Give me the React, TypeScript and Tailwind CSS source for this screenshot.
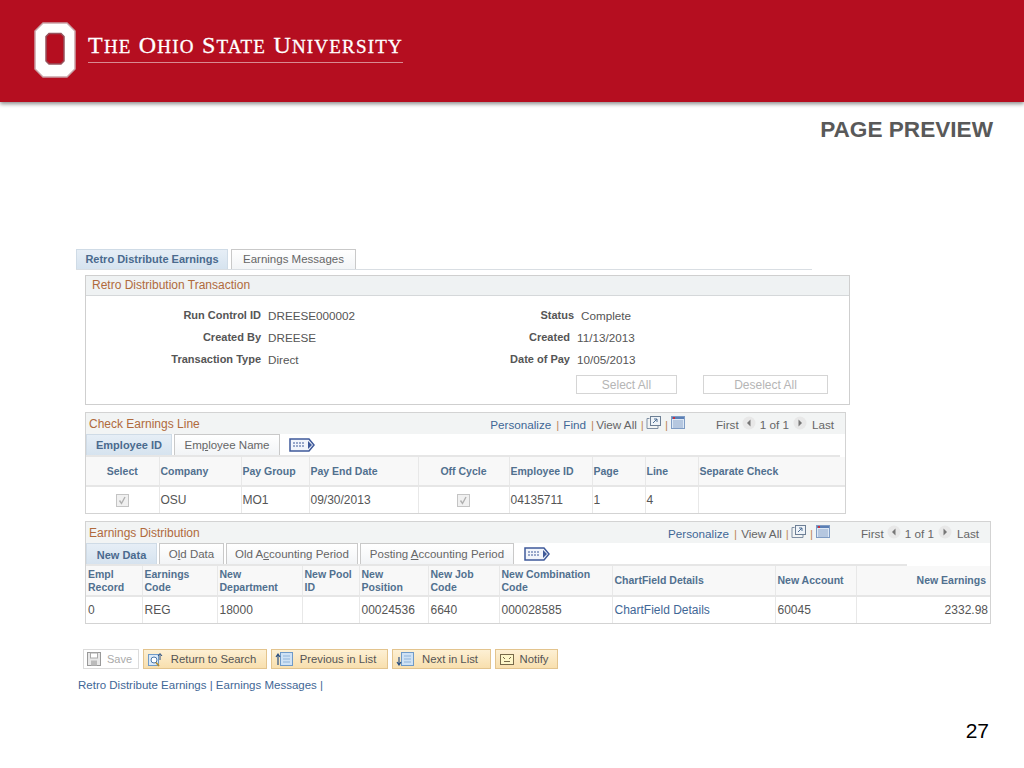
import type { ReactNode } from "react";

function Logo() {
  return (
    <svg width="42" height="56" viewBox="0 0 42 56" className="shrink-0">
      <path d="M9 1H33L41 9V47L33 55H9L1 47V9Z" fill="#fff" stroke="#c9a3a8" strokeWidth="1.5" />
      <path d="M15 11.500H27L30 14.500V39L27 42H15L12 39V14.500Z" fill="#b50e20" stroke="#96525c" strokeWidth="1.5" />
    </svg>
  );
}

function Tab({ active, children, w }: { active?: boolean; children: ReactNode; w: string }) {
  return (
    <div
      className={
        active
          ? `${w} h-full flex items-center justify-center border border-b-0 border-[#cfdbe6] bg-gradient-to-b from-[#e6eef6] to-[#d6e3ef] text-[11px] text-[#4a6a8e] font-bold`
          : `${w} h-full flex items-center justify-center border border-b-0 border-[#c9c9c9] bg-gradient-to-b from-white to-[#f2f4f6] text-[11.5px] text-[#666]`
      }
    >
      <span>{children}</span>
    </div>
  );
}

function DownloadIcon() {
  return (
    <svg width="15" height="14" viewBox="0 0 15 14" className="shrink-0">
      <path d="M3.500 2.500H1V12.500H12V10" fill="none" stroke="#7f8fa3" />
      <rect x="4.500" y="0.500" width="10" height="9" fill="#eef3f8" stroke="#6d7f95" />
      <path d="M7 7L11 3M8 3H11V6" fill="none" stroke="#4f6f94" />
    </svg>
  );
}

function GridIcon() {
  return (
    <svg width="14" height="13" viewBox="0 0 14 13" className="shrink-0">
      <rect x="0.500" y="0.500" width="13" height="12" fill="#dce8f6" stroke="#7f9cc4" />
      <rect x="1" y="1" width="12" height="2" fill="#5b7fb5" />
      <rect x="2" y="1" width="2" height="2" fill="#c9303e" />
      <path d="M2 5H12M2 7H12M2 9H12M2 11H12" stroke="#8ea6c9" />
    </svg>
  );
}

function ArrowCircle({ right }: { right?: boolean }) {
  return (
    <svg width="14" height="14" viewBox="0 0 14 14" className="shrink-0">
      <circle cx="7" cy="7" r="6.500" fill="#e8e8e8" />
      <path d={right ? "M5.500 3.500L9 7L5.500 10.500Z" : "M8.500 3.500L5 7L8.500 10.500Z"} fill="#777" />
    </svg>
  );
}

function ShowTabs() {
  return (
    <svg width="26" height="14" viewBox="0 0 26 14" className="shrink-0">
      <path d="M1 1H20L25 7L20 13H1Z" fill="#f2f5fb" stroke="#3f5a9a" strokeWidth="1.500" />
      <path d="M4 5H16M4 8H16" stroke="#3f5a9a" strokeDasharray="2 1" />
      <path d="M19 3L23 7L19 11Z" fill="#3f5a9a" />
    </svg>
  );
}

function Sep() {
  return <span className="text-[#c08a5c]">|</span>;
}

function GridTools({ find }: { find?: boolean }) {
  return (
    <div className="mt-[3px] flex items-center whitespace-nowrap text-[11.7px] text-[#666]">
      <span className="text-[#3f6796]">Personalize</span>
      <span className="ml-[5px] mr-[4px]"><Sep /></span>
      {find && (
        <>
          <span className="text-[#3f6796]">Find</span>
          <span className="ml-[5px] mr-[2px]"><Sep /></span>
        </>
      )}
      <span>View All</span>
      <span className="ml-[4px] mr-[2px]"><Sep /></span>
      <span className="-mt-1"><DownloadIcon /></span>
      <span className="ml-[4px] mr-[3px]"><Sep /></span>
      <span className="-mt-1"><GridIcon /></span>
      <span className="ml-[31px]">First</span>
      <span className="ml-[3px] -mt-1"><ArrowCircle /></span>
      <span className="ml-[4px]">1 of 1</span>
      <span className="ml-[4px] -mt-1"><ArrowCircle right /></span>
      <span className="ml-[5px]">Last</span>
    </div>
  );
}

function DisabledCheck() {
  return (
    <svg width="13" height="13" viewBox="0 0 13 13" className="mx-auto block">
      <rect x="0.500" y="0.500" width="12" height="12" fill="#f0f0f0" stroke="#c4c4c4" />
      <path d="M3.500 6.500L5.500 9.500L9 3" fill="none" stroke="#b0b0b0" strokeWidth="1.400" />
    </svg>
  );
}

function Th({ children, w, align }: { children?: ReactNode; w: string; align?: string }) {
  return (
    <th className={`${w} ${align ?? "text-left"} px-[1px] font-bold text-[10.5px] leading-[13px] text-[#51708f] border-r border-[#e8e8e8] last:border-r-0`}>
      {children}
    </th>
  );
}

function Td({ children, align }: { children?: ReactNode; align?: string }) {
  return (
    <td className={`${align ?? "text-left"} px-[1px] text-[12px] text-[#555] border-r border-[#e8e8e8] last:border-r-0`}>
      {children}
    </td>
  );
}

function Row({ label, value, labelW }: { label: string; value: string; labelW: string }) {
  return (
    <div className="flex items-center h-[22px] whitespace-nowrap">
      <div className={`${labelW} -mt-[2px] text-right font-bold text-[11px] text-[#555]`}>{label}</div>
      <div className="ml-[7px] text-[11.7px] text-[#555]">{value}</div>
    </div>
  );
}

function ToolBtn({ icon, children, w }: { icon: ReactNode; children: ReactNode; w: string }) {
  return (
    <div className={`${w} h-[20px] flex items-center pl-[3px] border border-[#e3c48e] bg-gradient-to-b from-[#fdf0d4] to-[#f8dfae] text-[#555] text-[11.3px] whitespace-nowrap`}>
      {icon}
      <span className="flex-1 text-center pr-[4px]">{children}</span>
    </div>
  );
}

function PageIcon({ down }: { down?: boolean }) {
  return (
    <svg width="18" height="14" viewBox="0 0 18 14" className="shrink-0">
      <rect x="5.500" y="0.500" width="12" height="13" fill="#cfe2f5" stroke="#6f9ac8" />
      <path d="M8 4H15M8 7H15M8 10H15" stroke="#8fb3d9" />
      <path d={down ? "M3 5V12M1 10L3 13L5 10" : "M3 13V3M1 5L3 2L5 5"} fill="none" stroke="#2a4f80" strokeWidth="1.200" />
    </svg>
  );
}

export default function App() {
  return (
    <div className="relative w-[1024px] h-[768px] overflow-hidden bg-white font-['Liberation_Sans',Arial,sans-serif] text-[12px]">
      <div className="h-[102px] bg-[#b50e20] shadow-[0_2px_4px_rgba(0,0,0,0.45)] flex pl-[34px] pt-[22px]">
        <Logo />
        <div className="ml-[12px] w-[315px] h-[41px] border-b border-[#d98a92] pt-[8px] font-['Liberation_Serif',serif] text-white text-[24px] leading-[30px] tracking-[1.2px] [-webkit-text-stroke:0.3px_white] whitespace-nowrap">
          T<span className="text-[19px]">HE</span> O<span className="text-[19px]">HIO</span> S<span className="text-[19px]">TATE</span> U<span className="text-[19px]">NIVERSITY</span>
        </div>
      </div>

      <div className="pt-[16px] pr-[31px] text-right font-bold text-[22.600px] leading-[24px] text-[#595959]">PAGE PREVIEW</div>

      <div className="mt-[107px] ml-[76px]">
        <div className="w-[736px] h-[21px] flex gap-[3px] border-b border-[#d9dee3]">
          <Tab active w="w-[152px]">Retro Distribute Earnings</Tab>
          <Tab w="w-[125px]">Earnin<u>g</u>s Messages</Tab>
        </div>

        <div className="mt-[5px] ml-[9px] w-[765px] h-[130px] border border-[#cfcfcf]">
          <div className="h-[20px] pl-[6px] pb-[1px] flex items-center bg-[#eff2f3] border-b border-[#d5d8da] text-[#b06a3c]">Retro Distribution Transaction</div>
          <div className="flex pt-[9px]">
            <div className="w-[400px]">
              <Row label="Run Control ID" value="DREESE000002" labelW="w-[175px]" />
              <Row label="Created By" value="DREESE" labelW="w-[175px]" />
              <Row label="Transaction Type" value="Direct" labelW="w-[175px]" />
            </div>
            <div>
              <Row label="Status" value="Complete" labelW="w-[88px]" />
              <Row label="Created" value="11/13/2013" labelW="w-[84px]" />
              <Row label="Date of Pay" value="10/05/2013" labelW="w-[84px]" />
            </div>
          </div>
          <div className="flex ml-[490px] mt-[4px] gap-[26px] text-[#b5b5b5]">
            <div className="w-[101px] h-[19px] flex items-center justify-center border border-[#d5d5d5]">Select All</div>
            <div className="w-[125px] h-[19px] flex items-center justify-center border border-[#d5d5d5]">Deselect All</div>
          </div>
        </div>

        <div className="mt-[7px] ml-[9px] w-[761px] h-[102px] border border-[#d3d3d3]">
          <div className="h-[21px] flex items-center justify-between bg-[#f2f4f4] pl-[3px] pr-[11px] text-[#b06a3c]">
            <span>Check Earnings Line</span>
            <GridTools find />
          </div>
          <div className="h-[21px] flex items-stretch gap-[2px]">
            <Tab active w="w-[86px] pt-[1px]">Employee ID</Tab>
            <Tab w="w-[106px] pt-[1px]">Em<u>p</u>loyee Name</Tab>
            <div className="ml-[7px] flex items-center"><ShowTabs /></div>
          </div>
          <div className="h-[2px] w-[754px] bg-[#e6e6e6]" />
          <table className="w-full table-fixed border-collapse">
            <thead>
              <tr className="h-[29px] bg-[#f8f8f8] border-b-2 border-[#e6e6e6]">
                <Th w="w-[73px]" align="text-center">Select</Th>
                <Th w="w-[82px]">Company</Th>
                <Th w="w-[68px]">Pay Group</Th>
                <Th w="w-[109px]">Pay End Date</Th>
                <Th w="w-[91px]" align="text-center">Off Cycle</Th>
                <Th w="w-[83px]">Employee ID</Th>
                <Th w="w-[53px]">Page</Th>
                <Th w="w-[53px]">Line</Th>
                <Th w="w-[147px]">Separate Check</Th>
              </tr>
            </thead>
            <tbody>
              <tr className="h-[27px]">
                <Td><DisabledCheck /></Td>
                <Td>OSU</Td>
                <Td>MO1</Td>
                <Td>09/30/2013</Td>
                <Td><DisabledCheck /></Td>
                <Td>04135711</Td>
                <Td>1</Td>
                <Td>4</Td>
                <Td />
              </tr>
            </tbody>
          </table>
        </div>

        <div className="mt-[7px] ml-[9px] w-[906px] h-[103px] border border-[#d3d3d3]">
          <div className="h-[21px] flex items-center justify-between bg-[#f2f4f4] pl-[3px] pr-[11px] text-[#b06a3c]">
            <span>Earnings Distribution</span>
            <GridTools />
          </div>
          <div className="h-[21px] flex items-stretch gap-[2px]">
            <Tab active w="w-[71px] pt-[2px]">New Data</Tab>
            <Tab w="w-[65px] pt-[2px]">O<u>l</u>d Data</Tab>
            <Tab w="w-[132px] pt-[2px]">Old A<u>c</u>counting Period</Tab>
            <Tab w="w-[154px] pt-[2px]">Posting <u>A</u>ccounting Period</Tab>
            <div className="ml-[8px] flex items-center"><ShowTabs /></div>
          </div>
          <div className="h-[2px] w-[821px] bg-[#e6e6e6]" />
          <table className="w-full table-fixed border-collapse [&_td]:pl-[2px] [&_th]:pl-[2px]">
            <thead>
              <tr className="h-[30px] bg-[#f8f8f8] border-b-2 border-[#e6e6e6]">
                <Th w="w-[56px]">Empl Record</Th>
                <Th w="w-[75px]">Earnings Code</Th>
                <Th w="w-[85px]">New Department</Th>
                <Th w="w-[57px]">New Pool ID</Th>
                <Th w="w-[69px]">New<br />Position</Th>
                <Th w="w-[71px]">New Job Code</Th>
                <Th w="w-[113px]">New Combination Code</Th>
                <Th w="w-[163px]">ChartField Details</Th>
                <Th w="w-[81px]">New Account</Th>
                <Th w="w-[134px] pr-[4px]" align="text-right">New Earnings</Th>
              </tr>
            </thead>
            <tbody>
              <tr className="h-[27px]">
                <Td>0</Td>
                <Td>REG</Td>
                <Td>18000</Td>
                <Td />
                <Td>00024536</Td>
                <Td>6640</Td>
                <Td>000028585</Td>
                <Td><span className="text-[#3f6796]">ChartField Details</span></Td>
                <Td>60045</Td>
                <Td align="text-right pr-[2px]">2332.98</Td>
              </tr>
            </tbody>
          </table>
        </div>

        <div className="mt-[25px] ml-[7px] flex gap-[4px]">
          <div className="w-[56px] h-[20px] flex items-center pl-[3px] border border-[#dcdcdc] text-[#aaa] text-[11px]">
            <svg width="14" height="14" viewBox="0 0 14 14" className="shrink-0">
              <rect x="0.500" y="0.500" width="13" height="13" fill="#e8e8e8" stroke="#999" />
              <rect x="3.500" y="1" width="7" height="5" fill="#fff" stroke="#aaa" />
              <rect x="4" y="8.500" width="6" height="5" fill="#bbb" />
            </svg>
            <span className="flex-1 text-center">Save</span>
          </div>
          <ToolBtn
            w="w-[124px]"
            icon={
              <svg width="18" height="15" viewBox="0 0 18 15" className="shrink-0">
                <rect x="1.500" y="2.500" width="10" height="11" fill="#dbe9f7" stroke="#6f9ac8" />
                <circle cx="7" cy="8" r="3" fill="#fff" stroke="#4c77a8" />
                <path d="M9 10.500L12 14" stroke="#b28a2b" strokeWidth="1.600" />
                <path d="M13 8V2M11 4L13 1.500L15 4" fill="none" stroke="#2a4f80" />
              </svg>
            }
          >
            Return to Search
          </ToolBtn>
          <ToolBtn w="w-[117px]" icon={<PageIcon />}>Previous in List</ToolBtn>
          <ToolBtn w="w-[99px]" icon={<PageIcon down />}>Next in List</ToolBtn>
          <ToolBtn
            w="w-[63px]"
            icon={
              <svg width="16" height="13" viewBox="0 0 16 13" className="shrink-0">
                <rect x="1.500" y="1.500" width="13" height="10" fill="#fdf6c9" stroke="#77694a" />
                <path d="M4 4L6 6M12 4L10 6M5 8.500H11" stroke="#77694a" />
              </svg>
            }
          >
            Notify
          </ToolBtn>
        </div>

        <div className="mt-[8px] ml-[2px] text-[11.5px] text-[#3f6796]">Retro Distribute Earnings | Earnings Messages |</div>
      </div>

      <div className="mt-[24px] pr-[35px] text-right text-[21px] leading-[26px] text-black">27</div>
    </div>
  );
}
